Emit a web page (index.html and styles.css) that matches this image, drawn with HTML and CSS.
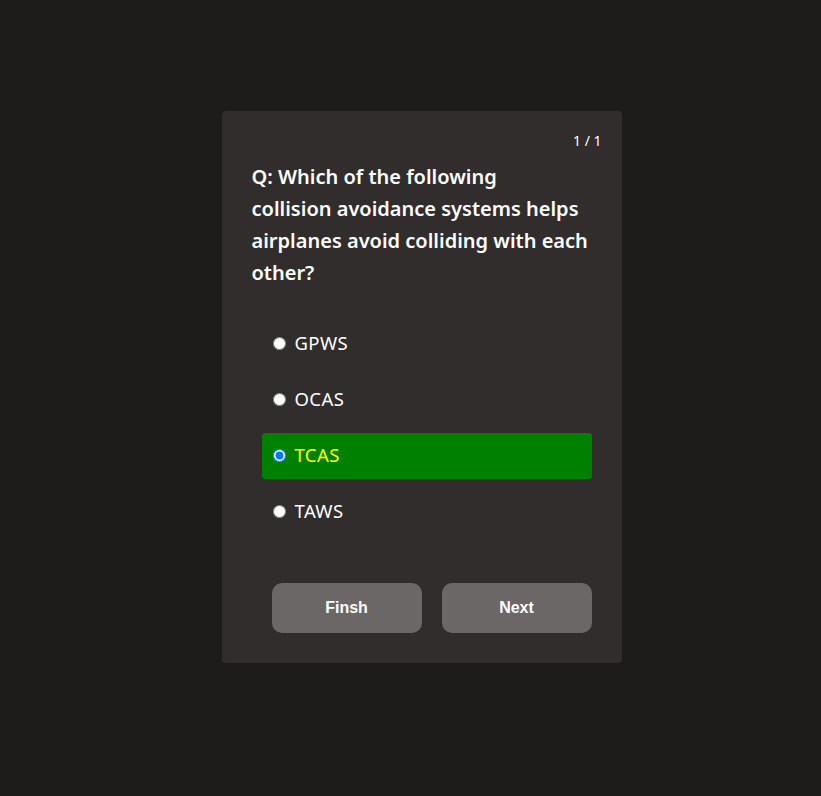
FILE: index.html
```html
<!DOCTYPE html>
<html lang="en">
<head>
<meta charset="utf-8">
<title>Quiz</title>
<link rel="stylesheet" href="styles.css">
</head>
<body>
<main class="page">
  <section class="card">
    <div class="counter">1 / 1</div>
    <h2 class="question">Q: Which of the following<br>collision avoidance systems helps<br>airplanes avoid colliding with each<br>other?</h2>
    <ul class="options">
      <li class="option"><label><input type="radio" name="ans"><span>GPWS</span></label></li>
      <li class="option"><label><input type="radio" name="ans"><span>OCAS</span></label></li>
      <li class="option selected"><label><input type="radio" name="ans" checked><span>TCAS</span></label></li>
      <li class="option"><label><input type="radio" name="ans"><span>TAWS</span></label></li>
    </ul>
    <div class="actions">
      <button class="btn">Finsh</button>
      <button class="btn">Next</button>
    </div>
  </section>
</main>
</body>
</html>
```
FILE: styles.css
```css
html, body {
  margin: 0;
  padding: 0;
  height: 100%;
}
body {
  background: #1e1b1b;
  font-family: "Noto Sans", "Open Sans", sans-serif;
  color: #ffffff;
}
.page {
  display: flex;
  justify-content: center;
  padding: 111px 0 0 22px;
}
.card {
  width: 400px;
  box-sizing: border-box;
  background: #312d2d;
  border-radius: 4px;
  padding: 20px 20px 30px 30px;
}
.counter {
  text-align: right;
  font-size: 14px;
  line-height: 20px;
}
.question {
  margin: 10px 0 0;
  font-size: 20px;
  font-weight: 600;
  line-height: 32px;
}
.options {
  list-style: none;
  margin: 32px 0 0 10px;
  padding: 0;
  width: 330px;
}
.option {
  height: 46px;
  box-sizing: border-box;
  margin-bottom: 10px;
  border-radius: 3px;
  display: flex;
  align-items: center;
  padding: 0 0 3px 10px;
}
.option label {
  display: flex;
  align-items: center;
  font-size: 18.5px;
  letter-spacing: 0.4px;
}
.option input {
  margin: 1px 9px 0 1px;
  width: 13px;
  height: 13px;
}
.option.selected {
  background: #008000;
  color: #ffff00;
}
.actions {
  display: flex;
  gap: 20px;
  margin: 48px 0 0 20px;
}
.btn {
  width: 150px;
  height: 50px;
  border: none;
  border-radius: 10px;
  background: #6b6766;
  color: #ffffff;
  font-family: "Liberation Sans", Arial, sans-serif;
  font-weight: bold;
  font-size: 16px;
}
```
